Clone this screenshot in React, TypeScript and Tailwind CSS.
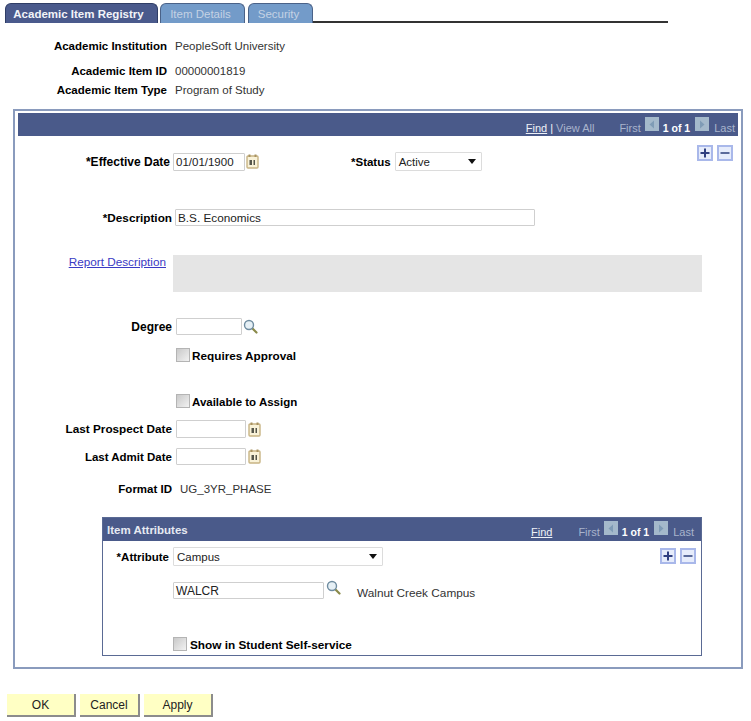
import type { ReactNode } from "react";

function CalendarIcon() {
	return (
		<svg width="13" height="15" viewBox="0 0 13 15" className="shrink-0">
			<rect x="1" y="2" width="11" height="12" rx="1" fill="#f9f2d8" stroke="#c8b484" strokeWidth="1.4" />
			<rect x="2.5" y="0.5" width="2" height="2.5" fill="#a89260" />
			<rect x="8.5" y="0.5" width="2" height="2.5" fill="#a89260" />
			<rect x="3.5" y="6" width="2.5" height="5" fill="#55554a" />
			<rect x="7.5" y="6" width="1.5" height="5" fill="#55554a" />
		</svg>
	);
}

function LookupIcon() {
	return (
		<svg width="15" height="15" viewBox="0 0 15 15" className="shrink-0">
			<line x1="9" y1="9" x2="13.5" y2="13.5" stroke="#8a8a4a" strokeWidth="2.2" strokeLinecap="round" />
			<circle cx="6" cy="6" r="4.5" fill="#e6f0f6" stroke="#6f8ca0" strokeWidth="1.4" />
		</svg>
	);
}

function ArrowBox({ left }: { left?: boolean }) {
	return (
		<span className="-mt-[8px] flex h-[14px] w-[14px] shrink-0 items-center justify-center bg-[#a4b9cb]">
			<svg width="6" height="9" viewBox="0 0 6 9">
				<path d={left ? "M5 0.5V8.5L0.5 4.5Z" : "M1 0.5V8.5L5.5 4.5Z"} fill="#7f9cb6" />
			</svg>
		</span>
	);
}

function Pager() {
	return (
		<>
			<span className="ml-[26px]">First</span>
			<span className="ml-[4px] flex items-center">
				<ArrowBox left />
			</span>
			<span className="ml-[4px] text-[10.5px] font-bold text-white">1 of 1</span>
			<span className="ml-[5px] flex items-center">
				<ArrowBox />
			</span>
			<span className="ml-[5px]">Last</span>
		</>
	);
}

function PlusMinus() {
	return (
		<div className="flex gap-[4px]">
			<span className="flex h-[16px] w-[16px] items-center justify-center border-2 border-[#a9b8ea] bg-[#e6ecfb]">
				<svg width="10" height="10" viewBox="0 0 10 10">
					<path d="M5 0.5V9.5M0.5 5H9.5" stroke="#2f3f80" strokeWidth="2" />
				</svg>
			</span>
			<span className="flex h-[16px] w-[16px] items-center justify-center border-2 border-[#a9b8ea] bg-[#e6ecfb]">
				<svg width="10" height="10" viewBox="0 0 10 10">
					<path d="M0.5 5H9.5" stroke="#5a6a9a" strokeWidth="2" />
				</svg>
			</span>
		</div>
	);
}

function TextBox({ className, value }: { className: string; value?: string }) {
	return (
		<div
			className={`flex shrink-0 items-center rounded-[1px] border border-[#cfcfcf] bg-white pl-[2px] text-[#222] ${className}`}
		>
			{value}
		</div>
	);
}

function SelectBox({ className, value }: { className: string; value: string }) {
	return (
		<div
			className={`flex shrink-0 items-center justify-between rounded-[1px] border border-[#dcdcdc] bg-white pl-[3px] pr-[5px] text-[#222] ${className}`}
		>
			{value}
			<svg width="8" height="5" viewBox="0 0 8 5">
				<path d="M0 0H8L4 5Z" fill="#111" />
			</svg>
		</div>
	);
}

function CheckRow({ label, className }: { label: string; className: string }) {
	return (
		<div className={`flex h-[14px] items-start font-bold text-black ${className}`}>
			<span className="block h-[14px] w-[14px] shrink-0 border border-[#b4b4b4] bg-gradient-to-br from-[#c9c9c9] to-[#f2f2f2]" />
			<span className="pt-[1px]">{label}</span>
		</div>
	);
}

function Label({ children, width = "w-[157px]" }: { children: ReactNode; width?: string }) {
	return (
		<span className={`shrink-0 whitespace-nowrap text-right font-bold text-black ${width}`}>
			{children}
		</span>
	);
}

function Tab({ label, active, width }: { label: string; active?: boolean; width: string }) {
	return (
		<div
			className={`flex h-[20px] items-center justify-center rounded-t-[6px] border border-b-0 ${width} ${
				active
					? "border-[#2f3d66] bg-[#4a5a8c] pr-[6px] font-bold text-[#f2f4f8]"
					: "border-[#4a6288] bg-[#739bc9] pr-[4px] text-[#c4d2e4]"
			}`}
		>
			{label}
		</div>
	);
}

function InfoRow({ label, value, className }: { label: string; value: string; className: string }) {
	return (
		<div className={`flex items-center gap-[8px] ${className}`}>
			<span className="w-[167px] shrink-0 text-right font-bold text-black">{label}</span>
			<span className="text-[#333]">{value}</span>
		</div>
	);
}

export default function App() {
	return (
		<div className="h-[721px] w-[751px] overflow-hidden bg-white font-['Liberation_Sans',Arial,sans-serif] text-[11.5px] leading-[14px]">
			<div className="flex pl-[5px] pt-[3px]">
				<Tab label="Academic Item Registry" active width="w-[153px]" />
				<Tab label="Item Details" width="ml-[2px] w-[85px]" />
				<Tab label="Security" width="ml-[3px] w-[65px]" />
				<div className="h-[20px] w-[355px] border-b-2 border-[#333]" />
			</div>

			<InfoRow label="Academic Institution" value="PeopleSoft University" className="mt-[16px]" />
			<InfoRow label="Academic Item ID" value="00000001819" className="mt-[11px]" />
			<InfoRow label="Academic Item Type" value="Program of Study" className="mt-[5px]" />

			<div className="ml-[13px] mt-[12px] h-[560px] w-[730px] border-2 border-[#8a9bbd] px-[3px] pt-[2px]">
				<div className="flex h-[23px] items-center justify-end bg-[#4a5a8a] pr-[3px]">
					<div className="mt-[7px] flex items-center text-[11px] text-[#a9b4cc]">
						<span className="text-[#eef1f7] underline">Find</span>
						<span className="ml-[3px] text-[#eef1f7]">|</span>
						<span className="-mr-[1px] ml-[3px]">View All</span>
						<Pager />
					</div>
				</div>

				<div className="-ml-[3px]">
					<div className="mt-[16px] flex h-[19px] items-center">
						<span className="text-[12px]">
							<Label width="block w-[155px]">*Effective Date</Label>
						</span>
						<TextBox className="ml-[3px] h-[18px] w-[72px]" value="01/01/1900" />
						<span className="ml-[1px]">
							<CalendarIcon />
						</span>
						<span className="ml-[92px] font-bold text-black">*Status</span>
						<SelectBox className="ml-[4px] h-[19px] w-[87px]" value="Active" />
						<div className="-mt-[17px] ml-auto mr-[5px]">
							<PlusMinus />
						</div>
					</div>

					<div className="mt-[38px] flex h-[17px] items-center text-[11.75px]">
						<Label>*Description</Label>
						<TextBox className="ml-[3px] h-[17px] w-[360px]" value="B.S. Economics" />
					</div>

					<div className="mt-[29px] flex h-[37px] text-[11.75px]">
						<span className="w-[151px] shrink-0 text-right text-[#3a3ac4] underline">
							Report Description
						</span>
						<div className="ml-[7px] h-[37px] w-[529px] bg-[#e5e5e5]" />
					</div>

					<div className="mt-[26px] flex h-[17px] items-center text-[12px]">
						<Label>Degree</Label>
						<TextBox className="ml-[4px] h-[17px] w-[66px]" />
						<span className="ml-[1px]">
							<LookupIcon />
						</span>
					</div>

					<CheckRow label="Requires Approval" className="ml-[161px] mt-[13px] gap-[2px] text-[11.75px]" />
					<CheckRow label="Available to Assign" className="ml-[161px] mt-[32px] gap-[2px]" />

					<div className="mt-[12px] flex h-[18px] items-center text-[11.75px]">
						<Label>Last Prospect Date</Label>
						<TextBox className="ml-[4px] h-[18px] w-[70px]" />
						<span className="ml-[2px]">
							<CalendarIcon />
						</span>
					</div>

					<div className="mt-[10px] flex h-[17px] items-center">
						<Label>Last Admit Date</Label>
						<TextBox className="ml-[4px] h-[17px] w-[70px]" />
						<span className="ml-[2px]">
							<CalendarIcon />
						</span>
					</div>

					<div className="mt-[16px] flex h-[16px] items-center">
						<Label>Format ID</Label>
						<span className="ml-[8px] text-[#333]">UG_3YR_PHASE</span>
					</div>

					<div className="ml-[87px] mt-[20px] h-[139px] w-[600px] border border-[#5a6a94]">
						<div className="flex h-[23px] items-center bg-[#4a5a8a] pl-[4px] pr-[7px]">
							<span className="font-bold text-[#e6eaf2]">Item Attributes</span>
							<div className="ml-auto mt-[5px] flex items-center text-[11px] text-[#a9b4cc]">
								<span className="text-[#eef1f7] underline">Find</span>
								<Pager />
							</div>
						</div>

						<div className="mt-[6px] flex h-[19px] items-center">
							<Label width="w-[66px]">*Attribute</Label>
							<SelectBox className="ml-[4px] h-[19px] w-[210px]" value="Campus" />
							<div className="-mt-[1px] ml-auto mr-[5px]">
								<PlusMinus />
							</div>
						</div>

						<div className="mt-[16px] flex h-[17px]">
							<TextBox className="ml-[70px] h-[17px] w-[151px] text-[12px]" value="WALCR" />
							<span className="-mt-[2px] ml-[2px]">
								<LookupIcon />
							</span>
							<span className="ml-[16px] mt-[4px] text-[11.8px] text-[#333]">Walnut Creek Campus</span>
						</div>

						<CheckRow
							label="Show in Student Self-service"
							className="ml-[70px] mt-[38px] gap-[3px] text-[11.8px]"
						/>
					</div>
				</div>
			</div>

			<div className="ml-[7px] mt-[25px] flex gap-[4px] text-[12px] text-[#222]">
				<button className="h-[23px] w-[69px] border-b-2 border-r-2 border-[#8c8c8c] bg-[#ffffc4]">OK</button>
				<button className="h-[23px] w-[60px] border-b-2 border-r-2 border-[#8c8c8c] bg-[#ffffc4]">Cancel</button>
				<button className="h-[23px] w-[69px] border-b-2 border-r-2 border-[#8c8c8c] bg-[#ffffc4]">Apply</button>
			</div>
		</div>
	);
}
